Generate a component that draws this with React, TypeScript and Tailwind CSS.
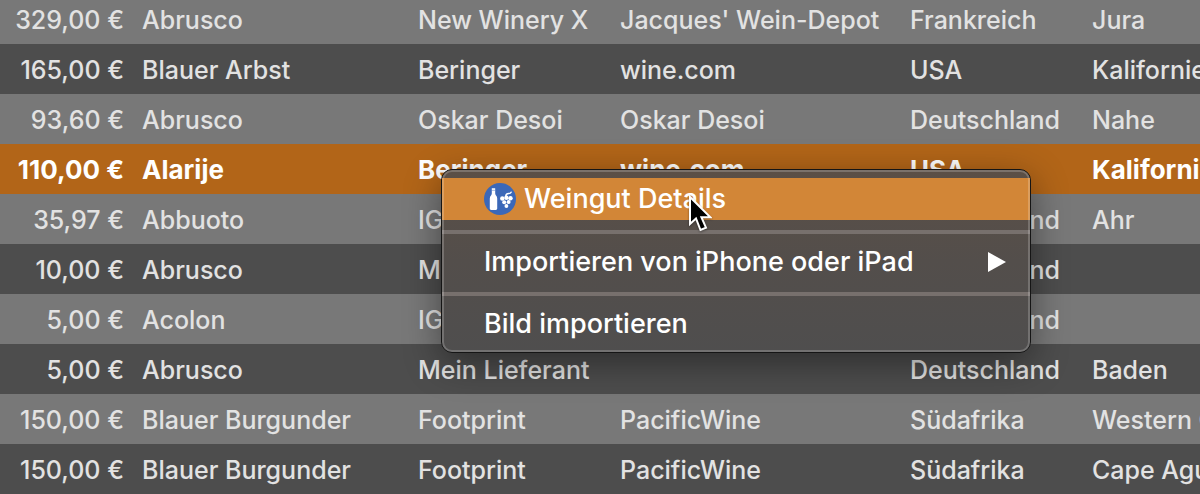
type Wine = {
  price: string;
  grape: string;
  winery: string;
  dealer: string;
  country: string;
  region: string;
  selected?: boolean;
};

const wines: Wine[] = [
  { price: "329,00 €", grape: "Abrusco", winery: "New Winery X", dealer: "Jacques' Wein-Depot", country: "Frankreich", region: "Jura" },
  { price: "165,00 €", grape: "Blauer Arbst", winery: "Beringer", dealer: "wine.com", country: "USA", region: "Kalifornien" },
  { price: "93,60 €", grape: "Abrusco", winery: "Oskar Desoi", dealer: "Oskar Desoi", country: "Deutschland", region: "Nahe" },
  { price: "110,00 €", grape: "Alarije", winery: "Beringer", dealer: "wine.com", country: "USA", region: "Kalifornien", selected: true },
  { price: "35,97 €", grape: "Abbuoto", winery: "IG", dealer: "", country: "Deutschland", region: "Ahr" },
  { price: "10,00 €", grape: "Abrusco", winery: "M", dealer: "", country: "Deutschland", region: "" },
  { price: "5,00 €", grape: "Acolon", winery: "IG", dealer: "", country: "Deutschland", region: "" },
  { price: "5,00 €", grape: "Abrusco", winery: "Mein Lieferant", dealer: "", country: "Deutschland", region: "Baden" },
  { price: "150,00 €", grape: "Blauer Burgunder", winery: "Footprint", dealer: "PacificWine", country: "Südafrika", region: "Western Cape" },
  { price: "150,00 €", grape: "Blauer Burgunder", winery: "Footprint", dealer: "PacificWine", country: "Südafrika", region: "Cape Agulhas" },
];

function WineIcon() {
  return (
    <svg viewBox="0 0 32 32" className="size-8 shrink-0" aria-hidden="true">
      <circle cx="16" cy="16" r="16" fill="#3b68b8" />
      <path
        d="M7.800 5.200h3.400v5.200c0 1.800 2 2.400 2 5v10.200c0 .9-.5 1.400-1.400 1.400H7.200c-.9 0-1.400-.5-1.400-1.400V15.400c0-2.600 2-3.200 2-5z"
        fill="#fff"
      />
      <path d="M7.800 7.300h3.400" stroke="#3b68b8" strokeWidth=".5" />
      <path d="M21.800 13c.2-2 1.400-2.500 2.900-2.500 1.300 0 2-.4 2.400-1.300" fill="none" stroke="#fff" strokeWidth="1.500" strokeLinecap="round" />
      <g fill="#fff">
        <circle cx="18.300" cy="15.500" r="2.200" />
        <circle cx="22.400" cy="14.800" r="2.200" />
        <circle cx="26.500" cy="15.300" r="2.200" />
        <circle cx="20.200" cy="19.200" r="2" />
        <circle cx="24.600" cy="19.100" r="2" />
        <circle cx="22.400" cy="23" r="1.900" />
      </g>
    </svg>
  );
}

function Pointer() {
  return (
    <svg
      viewBox="0 0 24 38"
      className="pointer-events-none absolute left-[246px] top-6 h-[38px] w-6 drop-shadow-[0_1px_1px_rgba(0,0,0,0.4)]"
      aria-hidden="true"
    >
      <path d="M2 3v27l6-5.600L12.500 36l5.500-2.300-4.600-10.500h9z" fill="#000" stroke="#fff" strokeWidth="2" strokeLinejoin="miter" />
    </svg>
  );
}

const itemClass = "flex h-[42px] w-full items-center gap-2 pl-[42px] pr-6 text-left";

function Separator() {
  return <div role="separator" className="mt-2.5 mb-1.5 h-1 bg-[#77706d]" />;
}

function ContextMenu() {
  return (
    <div
      role="menu"
      aria-label="Kontextmenü"
      className="absolute left-[441px] top-[169px] w-[590px] rounded-[11px] border border-[#151515] bg-linear-to-b from-[#5b4f46] via-[#534e4b] to-[#4f4e4e] py-2 text-[27px] leading-8 font-medium text-white shadow-[0_10px_36px_rgba(0,0,0,0.42)]"
    >
      <button type="button" role="menuitem" className={`${itemClass} bg-[#d28637]`}>
        <WineIcon />
        Weingut Details
      </button>
      <Separator />
      <button type="button" role="menuitem" aria-haspopup="menu" className={`${itemClass} pt-0.5`}>
        <span className="flex-1">Importieren von iPhone oder iPad</span>
        <svg viewBox="0 0 18 20" className="h-5 w-[18px]" aria-hidden="true">
          <path d="M0 0l18 10L0 20z" fill="#fff" />
        </svg>
      </button>
      <Separator />
      <button type="button" role="menuitem" className={`${itemClass} pt-0.5`}>
        Bild importieren
      </button>
      <div className="pointer-events-none absolute inset-0 rounded-[10px] border-2 border-white/20" />
      <Pointer />
    </div>
  );
}

export default function App() {
  return (
    <main className="relative overflow-hidden bg-[#4d4d4d] font-['Inter',sans-serif]">
      <table className="-mt-1.5 w-full table-fixed border-collapse text-[25px] leading-8 font-medium whitespace-nowrap text-[#e2e2e2]">
        <colgroup>
          <col className="w-[132px]" />
          <col className="w-[276px]" />
          <col className="w-[202px]" />
          <col className="w-[290px]" />
          <col className="w-[182px]" />
          <col />
        </colgroup>
        <tbody>
          {wines.map((wine, i) => (
            <tr
              key={i}
              aria-selected={wine.selected}
              className={
                wine.selected
                  ? "h-[50px] bg-[#b26518] text-[26px] font-bold text-white"
                  : "h-[50px] odd:bg-[#787878] even:bg-[#4d4d4d]"
              }
            >
              <td className="p-0 pt-0.5 pr-2 text-right">{wine.price}</td>
              <td className="p-0 pt-0.5 pl-2.5">{wine.grape}</td>
              <td className="p-0 pt-0.5 pl-2.5">{wine.winery}</td>
              <td className="p-0 pt-0.5 pl-2.5">{wine.dealer}</td>
              <td className="p-0 pt-0.5 pl-2.5">{wine.country}</td>
              <td className="overflow-hidden p-0 pt-0.5 pl-2.5">{wine.region}</td>
            </tr>
          ))}
        </tbody>
      </table>
      <ContextMenu />
    </main>
  );
}
